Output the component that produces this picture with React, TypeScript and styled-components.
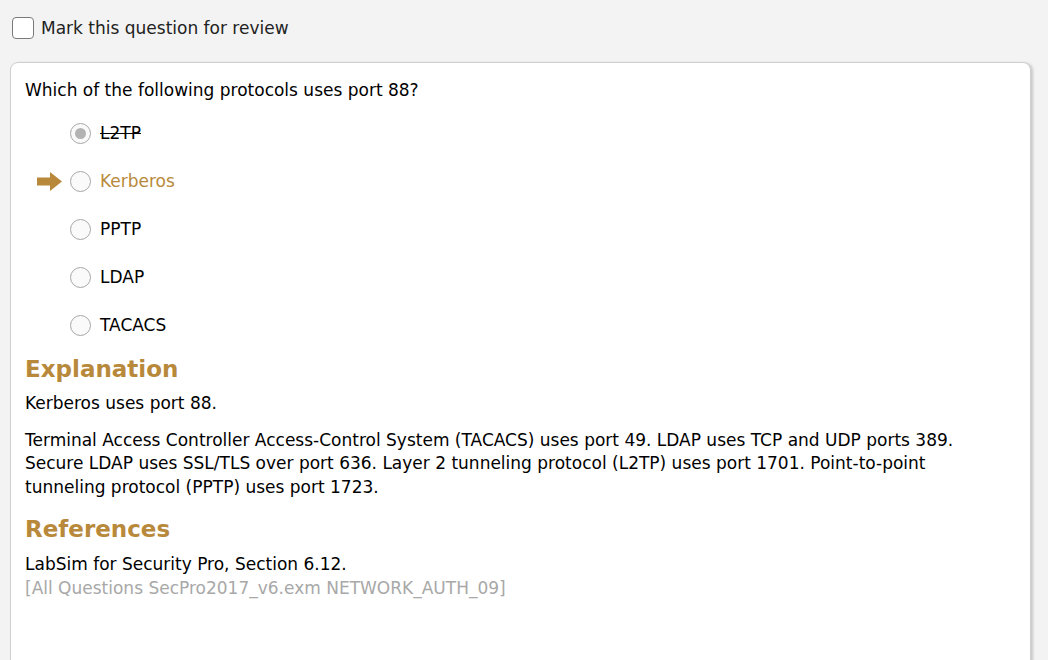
import React from "react";
import styled, { createGlobalStyle } from "styled-components";

const Global = createGlobalStyle`
  html, body { margin: 0; padding: 0; background: #f3f3f3; }
  body { font-family: "DejaVu Sans", Tahoma, Verdana, sans-serif; color: #000; }
`;

const Page = styled.div`
  width: 1048px;
  height: 660px;
  overflow: hidden;
  display: flex;
  flex-direction: column;
`;

const ReviewRow = styled.label`
  display: flex;
  align-items: center;
  gap: 7px;
  padding: 17px 0 0 12px;
  height: 22px;
  font-size: 17px;
  color: #222;
`;

const CheckBox = styled.span`
  width: 20px;
  height: 20px;
  border: 1px solid #7a7a7a;
  border-radius: 4px;
  background: #fff;
  flex: none;
`;

const Panel = styled.div`
  margin: 23px 0 0 10px;
  width: 1021px;
  min-height: 620px;
  background: #fff;
  border: 1px solid #cfcfcf;
  border-radius: 8px;
  box-shadow: 2px 1px 3px rgba(0, 0, 0, 0.18);
  padding: 16px 14px 0 14px;
  box-sizing: border-box;
`;

const Question = styled.div`
  font-size: 17px;
  line-height: 22px;
`;

const Options = styled.div`
  display: flex;
  flex-direction: column;
  margin-top: 8px;
`;

const Option = styled.div`
  display: flex;
  align-items: center;
  height: 48px;
`;

const ArrowSlot = styled.span`
  width: 45px;
  display: flex;
  justify-content: flex-start;
  padding-left: 12px;
  box-sizing: border-box;
`;

const Radio = styled.span<{ $checked?: boolean }>`
  width: 19px;
  height: 19px;
  border-radius: 50%;
  border: 1px solid #a6a6a6;
  background: #fafafa;
  display: flex;
  align-items: center;
  justify-content: center;
  flex: none;
  &::after {
    content: "";
    display: ${(p) => (p.$checked ? "block" : "none")};
    width: 11px;
    height: 11px;
    border-radius: 50%;
    background: #b3b3b3;
  }
`;

const OptionLabel = styled.span<{ $state?: "struck" | "correct" | "normal" }>`
  margin-left: 9px;
  font-size: 17px;
  color: ${(p) => (p.$state === "correct" ? "#b8893b" : "#000")};
  text-decoration: ${(p) => (p.$state === "struck" ? "line-through" : "none")};
`;

const Heading = styled.h2<{ $gap?: number }>`
  margin: ${(p) => p.$gap ?? 5}px 0 0 0;
  font-size: 23px;
  line-height: 30px;
  font-weight: bold;
  color: #b8893b;
`;

const Para = styled.p<{ $gap?: number }>`
  margin: ${(p) => p.$gap ?? 0}px 0 0 0;
  font-size: 17px;
  line-height: 23.5px;
  max-width: 950px;
`;

const RefSource = styled.div`
  font-size: 17px;
  line-height: 23px;
  color: #a8a8a8;
`;

const Arrow = () => (
  <svg width="25" height="19" viewBox="0 0 25 19">
    <polygon points="0,5.5 13,5.5 13,0 25,9.5 13,19 13,13.5 0,13.5" fill="#b8893b" />
  </svg>
);

const options: { text: string; state: "struck" | "correct" | "normal"; checked?: boolean; arrow?: boolean }[] = [
  { text: "L2TP", state: "struck", checked: true },
  { text: "Kerberos", state: "correct", arrow: true },
  { text: "PPTP", state: "normal" },
  { text: "LDAP", state: "normal" },
  { text: "TACACS", state: "normal" },
];

export default function App() {
  return (
    <Page>
      <Global />
      <ReviewRow>
        <CheckBox />
        Mark this question for review
      </ReviewRow>
      <Panel>
        <Question>Which of the following protocols uses port 88?</Question>
        <Options>
          {options.map((o) => (
            <Option key={o.text}>
              <ArrowSlot>{o.arrow ? <Arrow /> : null}</ArrowSlot>
              <Radio $checked={o.checked} />
              <OptionLabel $state={o.state}>{o.text}</OptionLabel>
            </Option>
          ))}
        </Options>
        <Heading>Explanation</Heading>
        <Para $gap={8}>Kerberos uses port 88.</Para>
        <Para $gap={13}>
          Terminal Access Controller Access-Control System (TACACS) uses port 49. LDAP uses TCP and UDP ports 389.
          Secure LDAP uses SSL/TLS over port 636. Layer 2 tunneling protocol (L2TP) uses port 1701. Point-to-point
          tunneling protocol (PPTP) uses port 1723.
        </Para>
        <Heading $gap={15}>References</Heading>
        <Para $gap={9}>LabSim for Security Pro, Section 6.12.</Para>
        <RefSource>[All Questions SecPro2017_v6.exm NETWORK_AUTH_09]</RefSource>
      </Panel>
    </Page>
  );
}
